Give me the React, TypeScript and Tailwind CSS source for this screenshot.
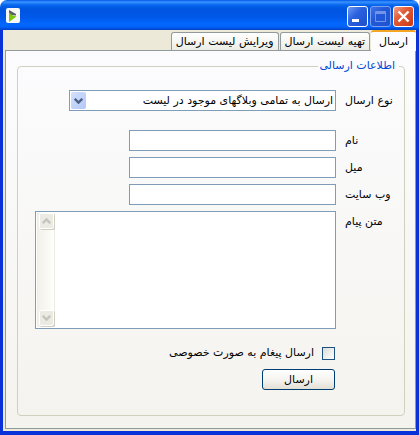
import React, { useState } from 'react'

const tabs = ['ارسال', 'تهیه لیست ارسال', 'ویرایش لیست ارسال']

const fields = [
  { id: 'name', label: 'نام' },
  { id: 'mail', label: 'میل' },
  { id: 'website', label: 'وب سایت' },
]

const inputStyle = 'block h-[21px] w-full border border-[#7f9db9] bg-white px-[2px] outline-none'
const labelStyle = 'w-12 shrink-0 whitespace-nowrap pt-[3px] text-left'
const captionButton = 'h-[21px] w-[21px] rounded-[3px] border border-white'

function Chevron({ up = false, color }: { up?: boolean; color: string }) {
  return (
    <svg width="9" height="6" viewBox="0 0 9 6" fill="none" stroke={color} strokeWidth="2.400">
      <path d={up ? 'M0.7 5.2 4.5 1.4 8.3 5.2' : 'M0.7 0.8 4.5 4.6 8.3 0.8'} />
    </svg>
  )
}

function TitleBar() {
  return (
    <header
      dir="ltr"
      className="flex h-[30px] items-center justify-between rounded-t-[7px] bg-[linear-gradient(#0058e6_0px,#3a93ff_2px,#0665ee_5px,#0055e0_9px,#0058e8_17px,#0368ff_24px,#0261f8_27px,#0042c4_30px)] pl-[6px] pr-[5px] pt-[2px]"
    >
      <svg width="15" height="16" viewBox="0 0 15 16">
        <rect x="0" y="0" width="14" height="15" rx="2" fill="#f8f8f6" />
        <path d="M3 2 10 6 10 7.500 3 7Z" fill="#5d6166" />
        <path d="M3 4.500 6.500 7.500 10.500 8.500 3 14Z" fill="#7cc80c" />
      </svg>
      <div className="flex gap-[2px]">
        <button
          aria-label="Minimize"
          className={`${captionButton} bg-[linear-gradient(135deg,#6f9cf5,#2b62df_40%,#1c4fcb)]`}
        >
          <svg width="19" height="19" viewBox="0 0 19 19">
            <rect x="4" y="12" width="7" height="3" fill="#fff" />
          </svg>
        </button>
        <button
          aria-label="Maximize"
          disabled
          className="h-[21px] w-[21px] rounded-[3px] border border-[#7c9ff0] bg-[linear-gradient(135deg,#3f74e8,#2359d8_40%,#1e52d0)]"
        >
          <svg width="19" height="19" viewBox="0 0 19 19" fill="none" stroke="#7295e8">
            <path d="M4.500 4.500h10v10h-10zM4 5.500h11M4 6.500h11" />
          </svg>
        </button>
        <button
          aria-label="Close"
          className={`${captionButton} bg-[linear-gradient(135deg,#f0a08a,#e25a36_40%,#c93a12)]`}
        >
          <svg width="19" height="19" viewBox="0 0 19 19" stroke="#fff" strokeWidth="2.400">
            <path d="M4.500 4.500 14.500 14.500M14.500 4.500 4.500 14.500" />
          </svg>
        </button>
      </div>
    </header>
  )
}

function Tabs({ active, onChange }: { active: number; onChange: (i: number) => void }) {
  return (
    <nav role="tablist" className="flex h-5 items-end gap-px">
      {tabs.map((tab, i) => (
        <button
          key={tab}
          role="tab"
          aria-selected={active === i}
          onClick={() => onChange(i)}
          className={
            active === i
              ? 'relative z-10 -mb-px h-[21px] whitespace-nowrap rounded-t-[3px] border-t-2 border-[#f5a524] bg-[#fcfcfe] px-2'
              : 'h-[18px] whitespace-nowrap rounded-t-[3px] border border-b-0 border-[#919b9c] bg-linear-to-b from-white to-[#edede6] px-1 pt-px'
          }
        >
          {tab}
        </button>
      ))}
    </nav>
  )
}

function ScrollBar() {
  const arrow =
    'flex h-4 w-[15px] items-center justify-center rounded-[2px] border border-white bg-[#ecebe3] shadow-[1px_1px_0_#cfcec0]'
  return (
    <div className="flex w-[18px] shrink-0 flex-col items-center justify-between border-x border-[#eeede5] bg-linear-to-r from-[#f2f1ea] to-[#fefefb] pb-px">
      <button aria-label="Scroll up" className={arrow}>
        <Chevron up color="#c5c4bd" />
      </button>
      <button aria-label="Scroll down" className={arrow}>
        <Chevron color="#c5c4bd" />
      </button>
    </div>
  )
}

export default function App() {
  const [active, setActive] = useState(0)

  return (
    <div
      dir="rtl"
      className="flex min-h-screen flex-col bg-white font-['DejaVu_Sans',sans-serif] text-[11px] leading-4 text-black"
    >
      <TitleBar />
      <div className="flex flex-1 flex-col border-x-3 border-b-4 border-[#0831d9] bg-[#ece9d8] pb-[2px] pl-[2px]">
        <Tabs active={active} onChange={setActive} />
        <main className="flex flex-1 flex-col border border-[#919b9c] bg-linear-to-b from-[#fcfcfe] to-[#f4f3ee] pb-3 pl-[11px] pr-[10px] pt-[7px]">
          <fieldset className="min-w-0 flex-1 rounded-[4px] border border-[#d0d0bf] pb-6 pl-[17px] pr-[11px]">
            <legend className="-mr-[6px] pl-px pr-1 text-[#0046d5]">اطلاعات ارسالی</legend>
            <form onSubmit={(e) => e.preventDefault()} className="pt-4">
              <div className="flex gap-[9px]">
                <label htmlFor="kind" className={labelStyle}>
                  نوع ارسال
                </label>
                <div className="relative ml-[34px] min-w-0 flex-1">
                  <select id="kind" className={`${inputStyle} appearance-none`}>
                    <option>ارسال به تمامی وبلاگهای موجود در لیست</option>
                  </select>
                  <span className="pointer-events-none absolute bottom-[2px] left-[2px] top-[2px] flex w-[15px] items-center justify-center rounded-[2px] bg-linear-to-br from-[#d3e0fd] to-[#b3c8f6]">
                    <Chevron color="#4d6185" />
                  </span>
                </div>
              </div>

              <div className="mt-[19px] flex flex-col gap-[6px]">
                {fields.map((field) => (
                  <div key={field.id} className="flex gap-[9px]">
                    <label htmlFor={field.id} className={labelStyle}>
                      {field.label}
                    </label>
                    <div className="ml-[94px] min-w-0 flex-1">
                      <input id={field.id} type="text" className={inputStyle} />
                    </div>
                  </div>
                ))}
                <div className="flex gap-[9px]">
                  <label htmlFor="message" className={labelStyle}>
                    متن پیام
                  </label>
                  <div className="flex h-[118px] min-w-0 flex-1 border border-[#7f9db9] bg-white p-px">
                    <textarea
                      id="message"
                      className="min-w-0 flex-1 resize-none overflow-hidden px-1 outline-none"
                    />
                    <ScrollBar />
                  </div>
                </div>
              </div>

              <div className="mr-[58px] mt-4 flex flex-col items-start gap-2">
                <label className="flex items-center gap-2">
                  <input
                    type="checkbox"
                    className="h-[13px] w-[13px] appearance-none border border-[#1c5180] bg-linear-to-br from-[#dcdcd7] to-white checked:bg-[#21a121] checked:bg-none"
                  />
                  ارسال پیغام به صورت خصوصی
                </label>
                <button
                  type="submit"
                  className="h-[21px] w-[73px] rounded-[3px] border border-[#003c74] bg-linear-to-b from-white via-[#f5f4f0] to-[#e3dfd4]"
                >
                  ارسال
                </button>
              </div>
            </form>
          </fieldset>
        </main>
      </div>
    </div>
  )
}
